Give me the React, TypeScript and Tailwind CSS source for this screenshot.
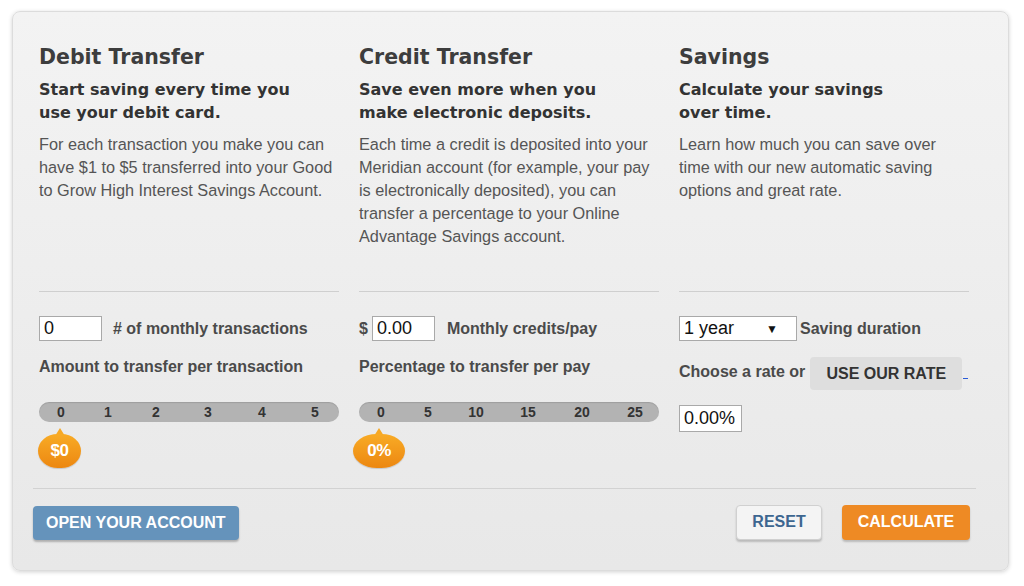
import { useState } from 'react';

const heading = "font-['DejaVu_Sans',sans-serif] font-bold";
const body = "font-['Liberation_Sans',Arial,sans-serif]";

// slider tick offsets, hand measured (the labels are not evenly spaced)
const tickGaps = ['ml-[12px]', 'ml-[27px]', 'ml-[28px]', 'ml-[32px]', 'ml-[34px]', 'ml-[33px]'];

const Badge = ({ label, wide }: { label: string; wide?: boolean }) => (
  <div className={`relative mt-[12px] ${wide ? 'ml-[-6px] w-[52px]' : 'ml-[-1px] w-[43px]'} h-[34px]`}>
    <div
      className={`absolute top-[-6px] ${wide ? 'left-[21px]' : 'left-[17px]'} w-0 h-0 border-l-[5px] border-r-[5px] border-b-[8px] border-l-transparent border-r-transparent border-b-[#f7a823]`}
    />
    <div className="absolute inset-0 rounded-[50%/55%] bg-gradient-to-b from-[#f8ab25] to-[#ec8710] shadow-[0_1px_1px_rgba(0,0,0,0.15)] flex items-center justify-center">
      <span className={`${body} text-white font-bold text-[17px] tracking-[-0.5px]`}>{label}</span>
    </div>
  </div>
);

const Track = ({ ticks }: { ticks: string[] }) => (
  <div className="mt-[23px] h-[20px] w-[300px] rounded-full bg-[#b3b3b3] shadow-[inset_0_1px_1px_rgba(0,0,0,0.12)] flex items-center">
    {ticks.map((t, i) => (
      <span key={t} className={`${body} ${tickGaps[i]} font-bold text-[14px] text-[#333] w-[20px] flex justify-center`}>
        {t}
      </span>
    ))}
  </div>
);

const Intro = ({ title, sub, text, narrow }: { title: string; sub: string[]; text: string[]; narrow?: boolean }) => (
  <div className={`h-[248px] border-b border-[#cfcfcf] ${narrow ? 'w-[290px]' : 'w-[300px]'}`}>
    <h2 className={`${heading} text-[20.5px] leading-[26px] text-[#3d3d3d]`}>{title}</h2>
    <div className={`${heading} text-[16px] leading-[23px] text-[#333] mt-[8px]`}>
      {sub.map(s => (
        <div key={s}>{s}</div>
      ))}
    </div>
    <div className={`${body} text-[16.3px] leading-[23px] text-[#555] mt-[9px]`}>
      {text.map(s => (
        <div key={s}>{s}</div>
      ))}
    </div>
  </div>
);

const inputCls = `${body} h-[25px] border border-[#a9a9a9] bg-white px-[4px] text-[18px] text-[#111] outline-none`;
const labelCls = `${body} font-bold text-[16px] text-[#4a4a4a] whitespace-nowrap`;

export default function App() {
  const [tx, setTx] = useState('0');
  const [credit, setCredit] = useState('0.00');
  const [rate, setRate] = useState('0.00%');

  return (
    <div className="w-[1024px] h-[586px] bg-white pt-[11px] pl-[12px]">
      <div className="w-[997px] h-[560px] rounded-[8px] border border-[#dcdcdc] bg-gradient-to-b from-[#f3f3f3] to-[#e8e8e8] shadow-[0_1px_4px_rgba(0,0,0,0.18)] flex flex-col">
        <div className="flex gap-[20px] pl-[26px] pt-[32px]">
          {/* debit */}
          <div className="w-[300px] flex flex-col">
            <Intro
              title="Debit Transfer"
              sub={['Start saving every time you', 'use your debit card.']}
              text={[
                'For each transaction you make you can',
                'have $1 to $5 transferred into your Good',
                'to Grow High Interest Savings Account.',
              ]}
            />
            <div className="flex items-center mt-[24px]">
              <input className={`${inputCls} w-[63px]`} value={tx} onChange={e => setTx(e.target.value)} />
              <span className={`${labelCls} ml-[11px]`}>#&nbsp;of monthly transactions</span>
            </div>
            <div className={`${labelCls} mt-[14px]`}>Amount to transfer per transaction</div>
            <Track ticks={['0', '1', '2', '3', '4', '5']} />
            <Badge label="$0" />
          </div>

          {/* credit */}
          <div className="w-[300px] flex flex-col">
            <Intro
              title="Credit Transfer"
              sub={['Save even more when you', 'make electronic deposits.']}
              text={[
                'Each time a credit is deposited into your',
                'Meridian account (for example, your pay',
                'is electronically deposited), you can',
                'transfer a percentage to your Online',
                'Advantage Savings account.',
              ]}
            />
            <div className="flex items-center mt-[24px]">
              <span className={labelCls}>$</span>
              <input className={`${inputCls} w-[63px] ml-[4px]`} value={credit} onChange={e => setCredit(e.target.value)} />
              <span className={`${labelCls} ml-[12px]`}>Monthly credits/pay</span>
            </div>
            <div className={`${labelCls} mt-[14px]`}>Percentage to transfer per pay</div>
            <Track ticks={['0', '5', '10', '15', '20', '25']} />
            <Badge label="0%" wide />
          </div>

          {/* savings */}
          <div className="w-[300px] flex flex-col">
            <Intro
              narrow
              title="Savings"
              sub={['Calculate your savings', 'over time.']}
              text={[
                'Learn how much you can save over',
                'time with our new automatic saving',
                'options and great rate.',
              ]}
            />
            <div className="flex items-center mt-[24px]">
              <div className={`${inputCls} w-[118px] flex items-center justify-between pr-[18px]`}>
                <span>1 year</span>
                <span className="text-[12px]">▼</span>
              </div>
              <span className={`${labelCls} ml-[3px]`}>Saving duration</span>
            </div>
            <div className="flex items-center mt-[16px]">
              <span className={`${labelCls} mt-[-3px]`}>Choose a rate or</span>
              <button className={`${body} shrink-0 ml-[5px] h-[33px] w-[152px] rounded-[4px] bg-[#dedede] font-bold text-[16px] text-[#333]`}>
                USE OUR RATE
              </button>
              <span className="shrink-0 ml-[1px] mt-[10px] w-[5px] h-[1px] bg-[#2a5bd7]" />
            </div>
            <input className={`${inputCls} w-[63px] mt-[15px] h-[27px]`} value={rate} onChange={e => setRate(e.target.value)} />
          </div>
        </div>

        <div className="mt-auto ml-[20px] mr-[32px] border-t border-[#d2d2d2] mb-[30px] pt-[15px] pr-[6px] flex items-center justify-between">
          <button className={`${body} h-[34px] px-[13px] rounded-[4px] bg-[#6593bb] text-white font-bold text-[16px] shadow-[0_2px_2px_rgba(0,0,0,0.25)] mt-[2px]`}>
            OPEN YOUR ACCOUNT
          </button>
          <div className="flex items-center gap-[20px]">
            <button className={`${body} h-[35px] w-[86px] rounded-[4px] border border-[#d0d0d0] bg-[#f4f4f4] text-[#3d6690] font-bold text-[16px] shadow-[0_2px_2px_rgba(0,0,0,0.2)]`}>
              RESET
            </button>
            <button className={`${body} h-[35px] w-[128px] rounded-[4px] bg-[#ee8a24] text-white font-bold text-[16px] shadow-[0_2px_2px_rgba(0,0,0,0.2)]`}>
              CALCULATE
            </button>
          </div>
        </div>
      </div>
    </div>
  );
}
